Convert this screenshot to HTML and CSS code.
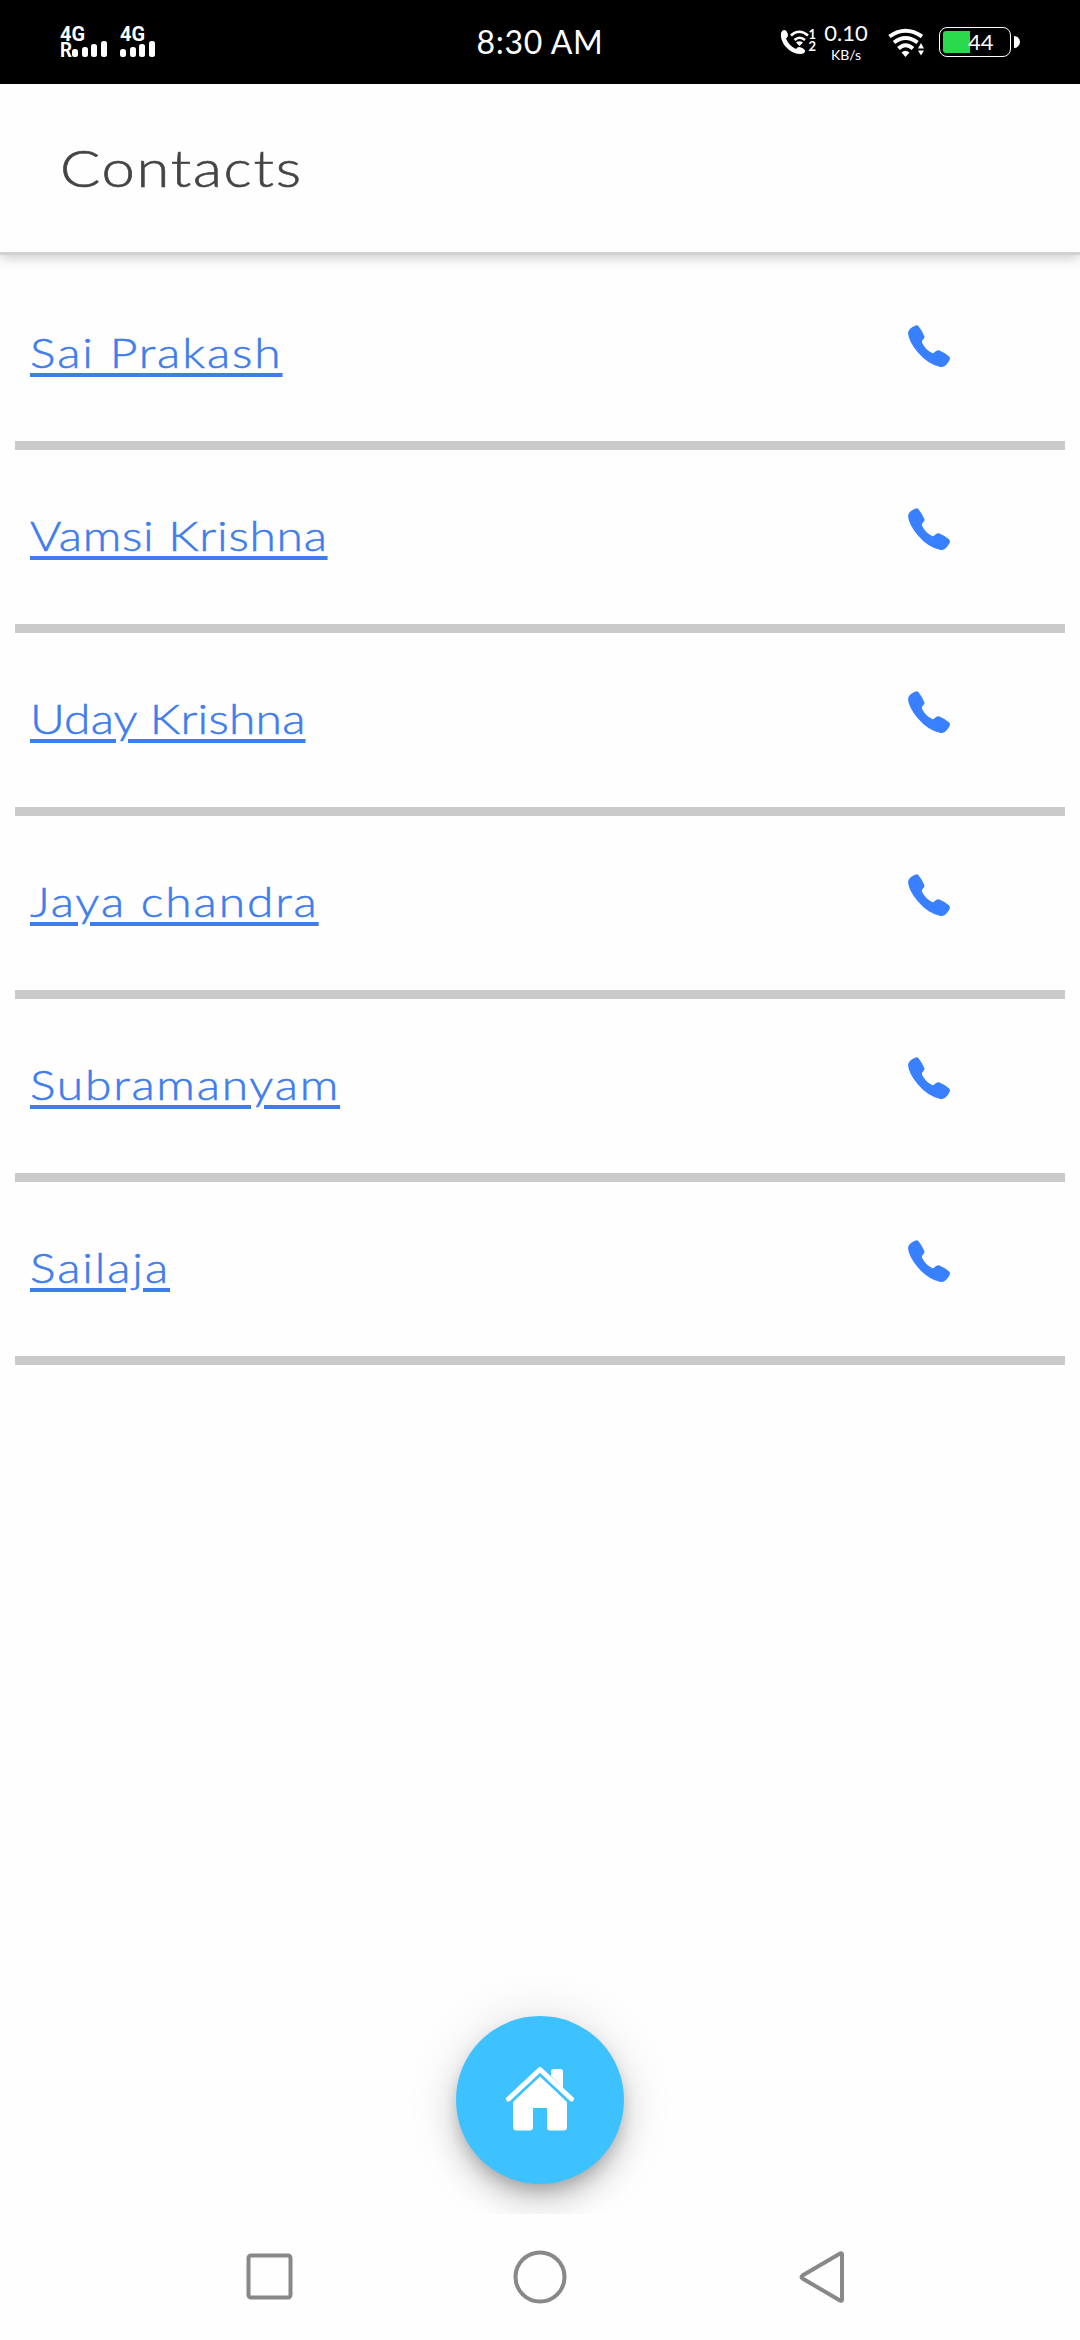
FILE: index.html
```html
<!DOCTYPE html>
<html lang="en">

<head>
    <meta charset="UTF-8">
    <meta name="viewport" content="width=device-width, initial-scale=1.0">
    <title>Contacts</title>
    <link rel="stylesheet" href="styles.css">
</head>

<body>
    <svg class="symbols" width="0" height="0">
        <symbol id="phone" viewBox="0 0 42 42">
            <path d="M7 0.8Q9 -0.6 10.5 1.2Q14 5.5 16.3 11Q17 13 15 14.5Q13.4 16 14.2 18Q17.5 25 24.5 28.2Q25.8 28 26.5 27.2Q29 24.6 31.5 25.4Q37 27.6 41.2 31.5Q42.8 33.5 41 36Q37.5 42.5 32.5 42Q20 39.5 9.5 27Q0.5 16 0 8Q0.3 3.8 7 0.8Z" />
        </symbol>
    </svg>

    <div class="status-bar">
        <!-- signal -->
        <svg class="signal" width="100" height="84" viewBox="0 0 100 84" fill="#fff">
            <g class="signal-text">
                <text x="0" y="41" textLength="25" lengthAdjust="spacingAndGlyphs">4G</text>
                <text x="0" y="57" textLength="12" lengthAdjust="spacingAndGlyphs">R</text>
                <text x="60" y="41" textLength="25" lengthAdjust="spacingAndGlyphs">4G</text>
            </g>
            <rect x="12" y="49" width="6" height="8" rx="2.5" />
            <rect x="22" y="47" width="6" height="10" rx="2.5" />
            <rect x="31" y="44" width="6" height="13" rx="2.5" />
            <rect x="41" y="41" width="6" height="16" rx="2.5" />
            <rect x="60" y="49" width="6" height="8" rx="2.5" />
            <rect x="70" y="47" width="6" height="10" rx="2.5" />
            <rect x="79" y="44" width="6" height="13" rx="2.5" />
            <rect x="89" y="41" width="6" height="16" rx="2.5" />
        </svg>

        <div class="time">8:30 AM</div>

        <div class="status-right">
            <svg class="wifi-call" width="36" height="84" viewBox="0 0 36 84" fill="#fff">
                <path d="M4 30Q7 30 8 35Q8 37 6 38.500Q9 46 16 49Q18 46 21 47.500Q25 49 25 51Q25 54 20 54Q12 54 5 46Q0 39 1 33Q2 30 4 30Z" />
                <g fill="none" stroke="#fff" stroke-width="2.600">
                    <path d="M11 35.500Q19 28 28 35.500" />
                    <path d="M14.500 40Q19.500 35.500 25 40" />
                </g>
                <path d="M16 42.500Q19.500 40 23 42.500L19.500 46Z" />
                <g class="sim-text">
                    <text x="28.500" y="39">1</text>
                    <text x="28.500" y="51">2</text>
                </g>
            </svg>
            <div class="speed">
                <span class="speed-value">0.10</span>
                <span class="speed-unit">KB/s</span>
            </div>
            <svg class="wifi" width="37" height="84" viewBox="0 0 37 84" fill="#fff">
                <g fill="none" stroke="#fff" stroke-width="4">
                    <path d="M1.500 36.500Q17.500 25 34 36.500" />
                    <path d="M6 42.500Q17.500 33.500 29.500 42.500" />
                    <path d="M10.500 48.500Q17.500 42 25 48.500" />
                </g>
                <path d="M13.500 52.500Q17.500 49 21.500 52.500L17.500 57Z" />
                <path d="M30 48.500L33 43L36 48.500ZM30 50.500L33 55.500L36 50.500Z" />
            </svg>
            <div class="battery">
                <div class="battery-body">
                    <div class="battery-level"></div>
                    <span class="battery-text">44</span>
                </div>
                <div class="battery-tip"></div>
            </div>
        </div>
    </div>

    <div class="header">
        <h1>Contacts</h1>
    </div>

    <div class="contacts">
        <div class="contact">
            <a class="name sai" href="#">Sai Prakash</a>
            <svg class="call"><use href="#phone" /></svg>
        </div>
        <div class="contact">
            <a class="name vamsi" href="#">Vamsi Krishna</a>
            <svg class="call"><use href="#phone" /></svg>
        </div>
        <div class="contact">
            <a class="name uday" href="#">Uday Krishna</a>
            <svg class="call"><use href="#phone" /></svg>
        </div>
        <div class="contact">
            <a class="name jaya" href="#">Jaya chandra</a>
            <svg class="call"><use href="#phone" /></svg>
        </div>
        <div class="contact">
            <a class="name subramanyam" href="#">Subramanyam</a>
            <svg class="call"><use href="#phone" /></svg>
        </div>
        <div class="contact">
            <a class="name sailaja" href="#">Sailaja</a>
            <svg class="call"><use href="#phone" /></svg>
        </div>
    </div>

    <div class="footer">
        <button class="home-btn">
            <svg width="70" height="66" viewBox="0 0 70 66">
                <path d="M3.500 33L35 3.500L66.500 33" fill="none" stroke="#fff" stroke-width="5" stroke-linecap="round" stroke-linejoin="round" />
                <path d="M46 10V5.500Q46 3 48.500 3H55.500Q58 3 58 5.500V22Z" fill="#fff" />
                <path d="M35 10.500L62 36V61Q62 64.500 58.500 64.500H45Q42 64.500 42 61V42H28V61Q28 64.500 24.500 64.500H11.500Q8 64.500 8 61V36Z" fill="#fff" />
            </svg>
        </button>
    </div>

    <!-- android buttons -->
    <div class="nav-bar">
        <svg width="54" height="54" viewBox="0 0 54 54"><rect x="5.500" y="5.500" width="42" height="42" rx="2.500" /></svg>
        <svg width="54" height="54" viewBox="0 0 54 54"><circle cx="27" cy="27" r="24.500" /></svg>
        <svg class="back" width="54" height="54" viewBox="0 0 54 54"><path d="M44 4.500V49.500Q44 51.500 42 50.500L4.500 28.500Q2.500 27 4.500 25.500L42 3.500Q44 2.500 44 4.500Z" /></svg>
    </div>
</body>

</html>
```
FILE: styles.css
```css
* {
    margin: 0;
    padding: 0;
    box-sizing: border-box;
}

body {
    display: flex;
    flex-direction: column;
    height: 2340px;
    background-color: #fefefe;
    font-family: Lato, "Open Sans", sans-serif;
}

.symbols {
    position: absolute;
}

.status-bar {
    display: grid;
    grid-template-columns: 1fr auto 1fr;
    height: 84px;
    padding: 0 60px;
    background-color: #000;
    color: #fff;
}

.signal-text {
    font: bold 20px Roboto, sans-serif;
}

.time {
    width: 130px;
    line-height: 83px;
    font-size: 32px;
    text-align: center;
    white-space: nowrap;
    letter-spacing: 0.7px;
}

.status-right {
    display: flex;
    justify-content: flex-end;
}

.sim-text {
    font: bold 13px Lato, sans-serif;
}

.speed {
    display: flex;
    flex-direction: column;
    align-items: center;
    width: 42px;
    margin-left: 9px;
    padding-top: 22px;
}

.speed-value {
    font-size: 22px;
    line-height: 22px;
}

.speed-unit {
    margin-top: 4px;
    font-size: 14px;
    line-height: 14px;
}

.wifi {
    margin-left: 21px;
}

.battery {
    display: flex;
    align-items: center;
    gap: 3px;
    margin-left: 14px;
}

.battery-body {
    display: flex;
    align-items: center;
    width: 72px;
    height: 30px;
    padding: 3px;
    border: 1.5px solid #fff;
    border-radius: 8px;
}

.battery-level {
    width: 27px;
    height: 22px;
    background-color: #2bd94d;
    border-radius: 3px 0 0 3px;
}

.battery-text {
    margin-left: -2px;
    font-size: 22px;
    line-height: 22px;
}

.battery-tip {
    width: 6px;
    height: 12px;
    background-color: #fff;
    border-radius: 0 6px 6px 0;
}

.header {
    height: 171px;
    padding-left: 60px;
    border-bottom: 3px solid #d2d2d2;
    box-shadow: 0 3px 12px rgba(0, 0, 0, 0.2);
}

.header h1 {
    width: 300px;
    color: #444;
    font-size: 51px;
    font-weight: 300;
    line-height: 168px;
    letter-spacing: 1.5px;
    -webkit-text-stroke: 0.6px #444;
    transform: scaleX(1.17);
    transform-origin: left;
}

.contacts {
    padding: 12px 15px 0;
}

.contact {
    display: flex;
    justify-content: space-between;
    height: 183px;
    padding: 58px 115px 0 15px;
    border-bottom: 9px solid #cacaca;
}

.name {
    height: 56px;
    color: #3f7ded;
    font-size: 41px;
    font-weight: 300;
    line-height: 56px;
    white-space: nowrap;
    text-decoration: underline;
    text-decoration-thickness: 4px;
    text-underline-offset: 5px;
    -webkit-text-stroke: 0.5px #3f7ded;
    transform: scaleX(1.17);
    transform-origin: left;
}

.sai,
.jaya,
.sailaja {
    letter-spacing: 1.6px;
}

.vamsi {
    letter-spacing: 0.6px;
}

.uday {
    letter-spacing: 0.15px;
}

.subramanyam {
    letter-spacing: 1.5px;
}

.call {
    width: 42px;
    height: 42px;
    fill: #3880ff;
}

.footer {
    display: flex;
    flex: 1;
    justify-content: center;
    align-items: flex-end;
    padding-bottom: 30px;
    overflow: hidden;
}

.home-btn {
    width: 168px;
    height: 168px;
    border: 0;
    border-radius: 50%;
    background-color: #3dc2ff;
    box-shadow: 0 9px 15px -3px rgba(0, 0, 0, 0.2), 0 18px 30px rgba(0, 0, 0, 0.14), 0 3px 54px rgba(0, 0, 0, 0.12);
}

.nav-bar {
    display: flex;
    justify-content: center;
    align-items: center;
    gap: 216px;
    height: 126px;
}

.nav-bar svg {
    fill: none;
    stroke: #888;
    stroke-width: 4;
}

.nav-bar .back {
    margin: 0 -15px 0 15px;
}
```
